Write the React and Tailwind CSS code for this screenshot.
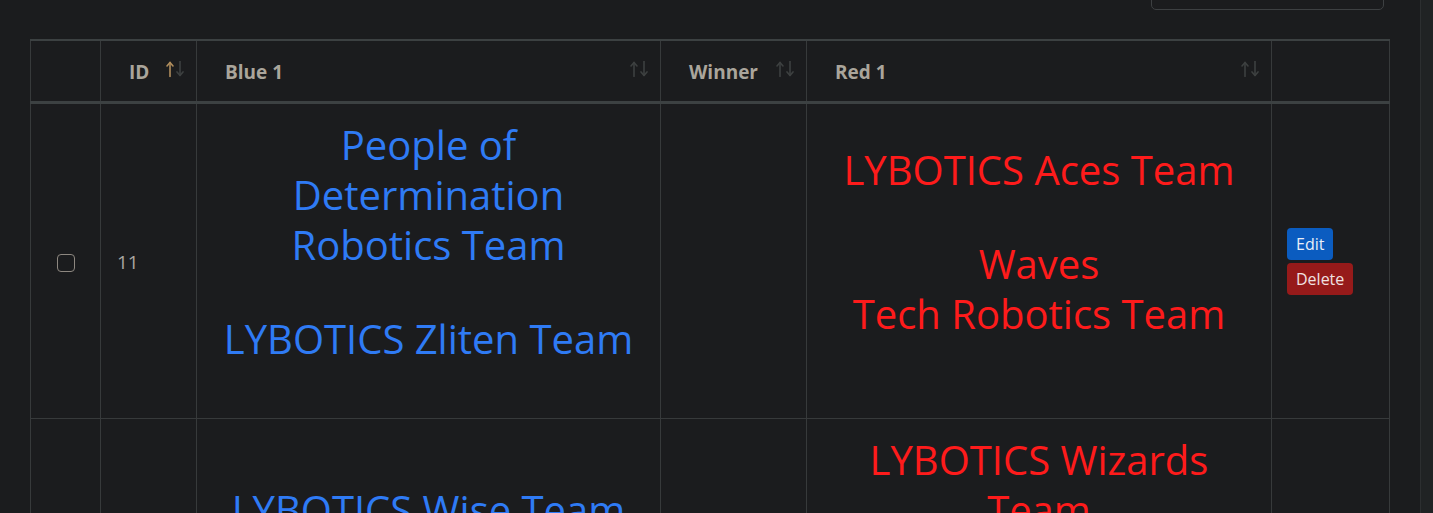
const rows = [
  {
    id: 11,
    blue: [['People of Determination Robotics Team'], ['LYBOTICS Zliten Team']],
    red: [['LYBOTICS Aces Team'], ['Waves', 'Tech Robotics Team']],
  },
  {
    id: 12,
    blue: [['LYBOTICS Wise Team'], ['LYBOTICS Sabha Team']],
    red: [['LYBOTICS Wizards Team'], ['Future Makers Robotics Team']],
  },
];

const SortArrows = ({ active }) => (
  <svg
    viewBox="0 0 20 17"
    className="absolute right-[11px] top-1/2 h-[17px] w-[20px] -translate-y-[62%]"
    fill="none"
    strokeWidth="1.6"
    strokeLinecap="round"
    strokeLinejoin="round"
  >
    <g stroke={active ? '#b08d5c' : '#3d4040'}>
      <path d="M5 16V2" />
      <path d="M2 5.5L5 2l3 3.5" />
    </g>
    <g stroke="#3d4040">
      <path d="M15 1v14" />
      <path d="M12 11.5l3 3.5 3-3.5" />
    </g>
  </svg>
);

const Th = ({ children, sort, active }) => (
  <th className="relative border border-[#373a3b] pl-[28px] pr-[30px] pt-[3px] text-left align-middle text-[19px] font-bold text-[#aaa59b]">
    {children}
    {sort && <SortArrows active={active} />}
  </th>
);

// each team is a list of lines, teams separated by a blank gap
const TeamCell = ({ teams, color }) => (
  <td className="border border-[#373a3b] px-3 pt-4 pb-[54px] align-middle">
    <div className={`flex flex-col gap-[44px] text-center text-[40px] font-medium leading-[50px] ${color}`}>
      {teams.map((lines) => (
        <div key={lines.join(' ')}>
          {lines.map((l) => (
            <div key={l}>{l}</div>
          ))}
        </div>
      ))}
    </div>
  </td>
);

export default function App() {
  return (
    <div className="flex h-[513px] overflow-hidden bg-[#1b1c1e] font-['Open_Sans',sans-serif]">
      <div className="flex-1 px-[30px]">
        <div className="flex justify-end pr-[6px]">
          <div className="-mt-[30px] mb-[29px] h-[40px] w-[233px] rounded-[5px] border border-[#3d4042]" />
        </div>
        <table className="w-[1359px] table-fixed border-collapse border-t-2 border-[#3c4142]">
          <colgroup>
            <col className="w-[70px]" />
            <col className="w-[96px]" />
            <col className="w-[464px]" />
            <col className="w-[146px]" />
            <col className="w-[465px]" />
            <col className="w-[118px]" />
          </colgroup>
          <thead>
            <tr className="h-[62px] border-b-[3px] border-b-[#3c4142]">
              <Th />
              <Th sort active>ID</Th>
              <Th sort>Blue 1</Th>
              <Th sort>Winner</Th>
              <Th sort>Red 1</Th>
              <Th />
            </tr>
          </thead>
          <tbody>
            {rows.map((r) => (
              <tr key={r.id}>
                <td className="border border-[#373a3b] pt-[2px] text-center align-middle">
                  <input
                    type="checkbox"
                    className="h-[18px] w-[18px] appearance-none rounded-[4px] border border-[#8d8780] bg-transparent align-middle"
                  />
                </td>
                <td className="border border-[#373a3b] pl-[16px] pt-[3px] align-middle text-[19px] text-[#aaa7a2]">{r.id}</td>
                <TeamCell teams={r.blue} color="text-[#2f7bf5]" />
                <td className="border border-[#373a3b]" />
                <TeamCell teams={r.red} color="text-[#fe1b1b]" />
                <td className="border border-[#373a3b] pl-[15px] pt-[2px] align-middle">
                  <div className="flex flex-col items-start gap-[3px]">
                    <button className="rounded-[4px] bg-[#0b5cc0] px-[9px] py-[3px] text-[16px] leading-[26px] text-[#e8eef8]">
                      Edit
                    </button>
                    <button className="rounded-[4px] bg-[#961a1a] px-[9px] py-[3px] text-[16px] leading-[26px] text-[#f0e2e2]">
                      Delete
                    </button>
                  </div>
                </td>
              </tr>
            ))}
          </tbody>
        </table>
      </div>
      <div className="w-[14px] border-l border-[#2c2f30] bg-[#202324]" />
    </div>
  );
}
